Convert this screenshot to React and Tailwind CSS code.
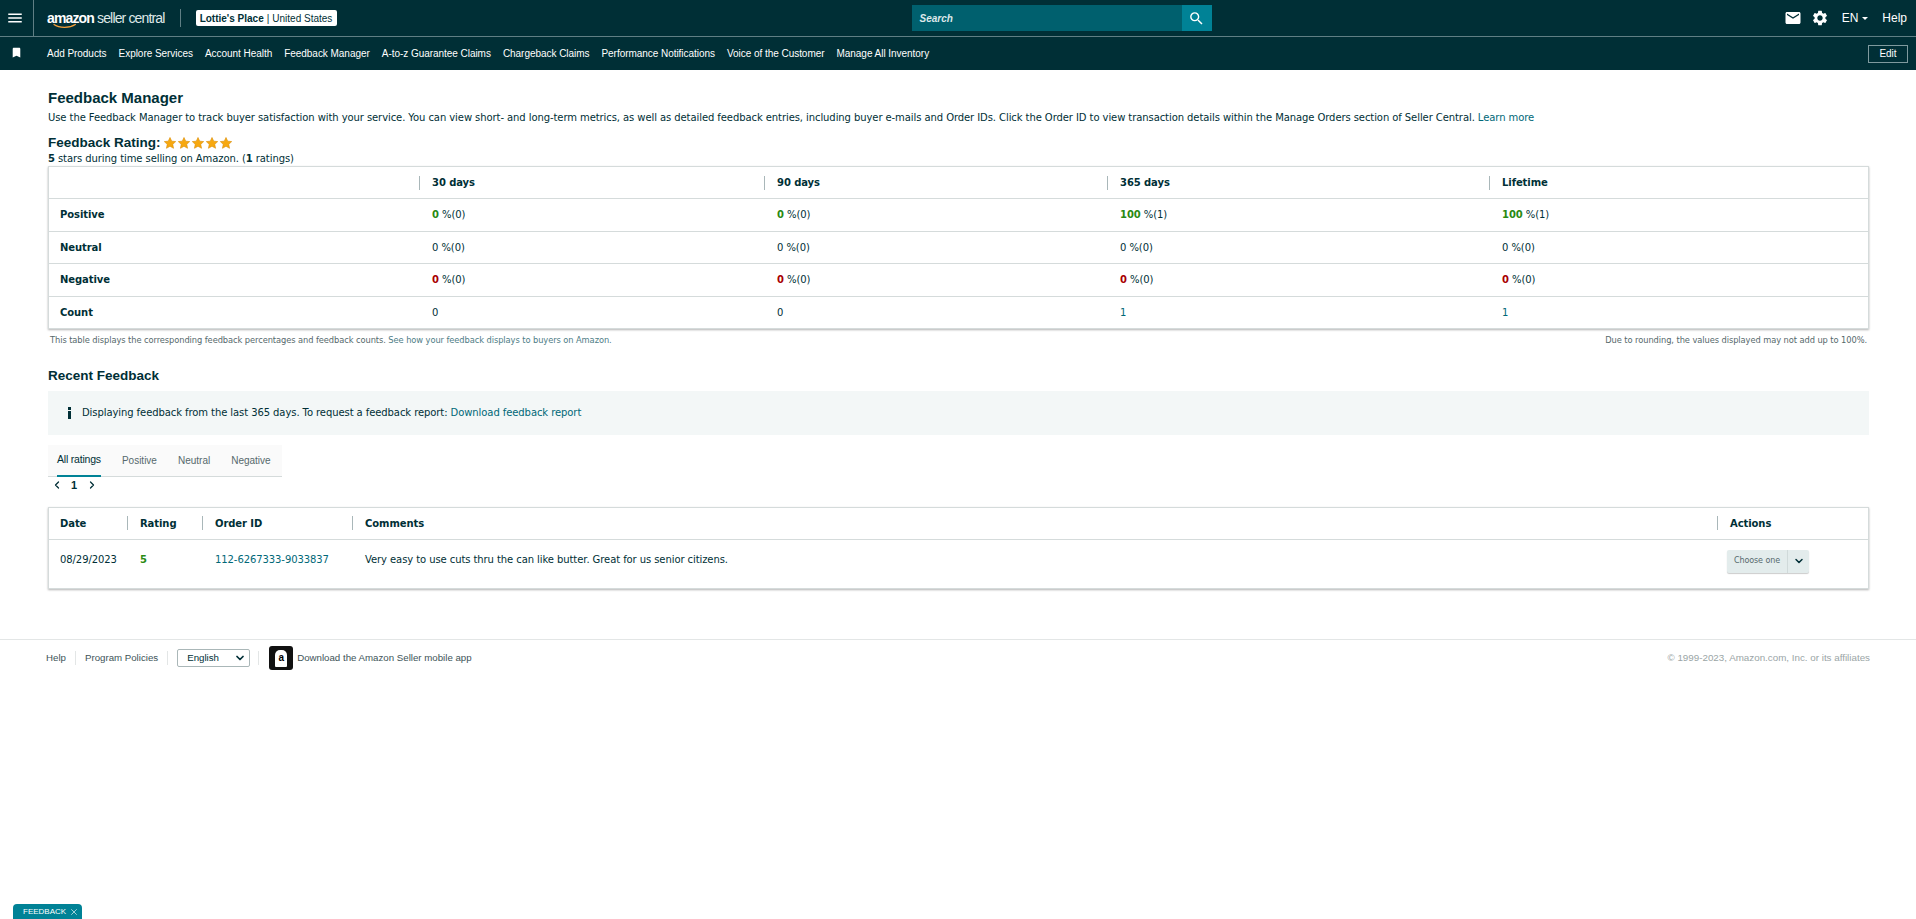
import React from 'react';
import { ChevronLeft, ChevronRight, ChevronDown, X } from 'lucide-react';
import { MdMenu, MdSearch, MdEmail, MdSettings, MdBookmark } from 'react-icons/md';

const navLinks = [
  'Add Products',
  'Explore Services',
  'Account Health',
  'Feedback Manager',
  'A-to-z Guarantee Claims',
  'Chargeback Claims',
  'Performance Notifications',
  'Voice of the Customer',
  'Manage All Inventory',
];

const summaryRows = [
  { label: 'Positive', tone: 'text-[#2a8a12]', cells: [['0', '0'], ['0', '0'], ['100', '1'], ['100', '1']] },
  { label: 'Neutral', tone: 'text-[#002f36]', cells: [['0', '0'], ['0', '0'], ['0', '0'], ['0', '0']], plain: true },
  { label: 'Negative', tone: 'text-[#a80000]', cells: [['0', '0'], ['0', '0'], ['0', '0'], ['0', '0']] },
];

const Star = () => (
  <svg viewBox="0 0 24 24" className="w-[14px] h-[14px]">
    <path
      d="M12 2.5l2.9 6.3 6.9.8-5.1 4.7 1.4 6.8L12 17.6l-6.1 3.5 1.4-6.8-5.1-4.7 6.9-.8z"
      fill="#f7a80f"
      stroke="#d98a00"
      strokeWidth="1"
    />
  </svg>
);

const HeadCell = ({ children, divider = true, className = '' }) => (
  <div className={`flex items-center h-full ${className}`}>
    {divider && <span className="w-px h-[14px] bg-[#a9b7b9] mr-[12px]" />}
    <span className="font-bold">{children}</span>
  </div>
);

function TopBar() {
  return (
    <header className="bg-[#002f36] text-white font-['Liberation_Sans',sans-serif]">
      <div className="h-[36px] flex items-center border-b border-[#5f7f84] box-content">
        <div className="w-[34px] h-full flex items-center pl-[6px] border-r border-[#5f7f84]">
          <MdMenu className="w-[18px] h-[18px]" />
        </div>
        <div className="relative ml-[13px] flex items-baseline leading-none">
          <span className="text-[14px] font-bold tracking-[-0.85px]">amazon</span>
          <span className="ml-[3px] text-[14px] tracking-[-0.85px] text-[#dfe8e8]">seller central</span>
          <svg viewBox="0 0 40 8" className="absolute left-[6px] top-[12px] w-[24px] h-[6px]">
            <path d="M1 1c10 7 26 7 37 0" fill="none" stroke="#f7a03a" strokeWidth="2" />
          </svg>
        </div>
        <span className="w-px h-[18px] bg-[#5f7f84] ml-[15px]" />
        <div className="ml-[15px] h-[16px] w-[141px] flex items-center justify-center bg-white rounded-[2px] text-[#002f36] text-[10px]">
          <span className="font-bold">Lottie's Place</span>
          <span className="mx-[3px]">|</span>
          <span>United States</span>
        </div>
        <div className="ml-[575px] w-[300px] h-[26px] flex bg-[#00606e]">
          <span className="flex-1 pl-[8px] flex items-center text-[10px] italic font-bold text-[#dce8ea]">Search</span>
          <span className="w-[30px] flex items-center justify-center bg-[#008296]">
            <MdSearch className="w-[17px] h-[17px]" />
          </span>
        </div>
        <div className="ml-auto flex items-center pr-[9px] text-[12px]">
          <MdEmail className="w-[18px] h-[18px]" />
          <MdSettings className="ml-[9px] w-[18px] h-[18px]" />
          <span className="ml-[13px]">EN</span>
          <span className="ml-[4px] border-x-[3px] border-x-transparent border-t-[3px] border-t-white" />
          <span className="ml-[14px]">Help</span>
        </div>
      </div>
      <nav className="h-[33px] flex items-center text-[10px]">
        <MdBookmark className="ml-[10px] w-[13px] h-[13px] mb-[3px]" />
        <div className="ml-[24px] flex gap-[12px] tracking-[-0.04px]">
          {navLinks.map(l => <span key={l}>{l}</span>)}
        </div>
        <span className="ml-auto mr-[8px] w-[40px] h-[18px] flex items-center justify-center border border-[#7f9a9e] text-[10px]">
          Edit
        </span>
      </nav>
    </header>
  );
}

function SummaryTable() {
  const gridCols = 'grid grid-cols-[370px_345px_343px_382px_1fr] items-center px-0';
  return (
    <div className="mt-[1px] border border-[#d5dbdb] shadow-[0_1px_2px_rgba(0,0,0,0.3)]">
      <div className={`${gridCols} h-[32px] border-b border-[#d5dbdb]`}>
        <span />
        <HeadCell>30 days</HeadCell>
        <HeadCell>90 days</HeadCell>
        <HeadCell>365 days</HeadCell>
        <HeadCell>Lifetime</HeadCell>
      </div>
      {summaryRows.map(row => (
        <div key={row.label} className={`${gridCols} h-[32.5px] border-b border-[#d5dbdb]`}>
          <span className="pl-[11px] font-bold">{row.label}</span>
          {row.cells.map(([pct, n], i) => (
            <span key={i} className="pl-[13px]">
              <span className={row.plain ? '' : `font-bold ${row.tone}`}>{pct}</span> %({n})
            </span>
          ))}
        </div>
      ))}
      <div className={`${gridCols} h-[31px]`}>
        <span className="pl-[11px] font-bold">Count</span>
        <span className="pl-[13px]">0</span>
        <span className="pl-[13px]">0</span>
        <span className="pl-[13px] text-[#006878]">1</span>
        <span className="pl-[13px] text-[#006878]">1</span>
      </div>
    </div>
  );
}

function FeedbackTable() {
  const gridCols = 'grid grid-cols-[78px_75px_150px_1365px_1fr] items-center';
  return (
    <div className="mt-[13px] border border-[#d5dbdb] shadow-[0_1px_2px_rgba(0,0,0,0.3)]">
      <div className={`${gridCols} h-[32px] border-b border-[#d5dbdb]`}>
        <span className="pl-[11px] font-bold">Date</span>
        <HeadCell>Rating</HeadCell>
        <HeadCell>Order ID</HeadCell>
        <HeadCell>Comments</HeadCell>
        <HeadCell>Actions</HeadCell>
      </div>
      <div className={`${gridCols} h-[48px]`}>
        <span className="pl-[11px] mb-[9px] whitespace-nowrap">08/29/2023</span>
        <span className="pl-[13px] mb-[9px] font-bold text-[#2a8a12]">5</span>
        <span className="pl-[13px] mb-[9px] text-[#006878] whitespace-nowrap">112-6267333-9033837</span>
        <span className="pl-[13px] mb-[9px]">Very easy to use cuts thru the can like butter. Great for us senior citizens.</span>
        <div className="flex h-[23px] w-[82px] mb-[5px] ml-[10px] bg-[#e3ecec] shadow-[0_1px_1px_rgba(0,0,0,0.2)] rounded-[2px] text-[8px] text-[#56696c]">
          <span className="flex-1 flex items-center justify-center border-r border-[#d0dada]">Choose one</span>
          <span className="w-[21px] flex items-center justify-center text-[#002f36]">
            <ChevronDown className="w-[12px] h-[12px]" strokeWidth={3} />
          </span>
        </div>
      </div>
    </div>
  );
}

function Footer() {
  return (
    <footer className="mt-[50px] h-[38px] border-t border-[#e3e6e6] flex items-center pl-[46px] pr-[46px] text-[9.7px] text-[#3d5357] font-['Liberation_Sans',sans-serif]">
      <span>Help</span>
      <span className="w-px h-[14px] bg-[#e3e6e6] mx-[9px]" />
      <span>Program Policies</span>
      <span className="w-px h-[14px] bg-[#e3e6e6] mx-[9px]" />
      <div className="w-[73px] h-[18px] border border-[#aab7b8] rounded-[2px] flex items-center justify-between pl-[9px] pr-[3px] text-[#002f36]">
        English
        <ChevronDown className="w-[12px] h-[12px]" strokeWidth={3.5} />
      </div>
      <span className="w-px h-[14px] bg-[#e3e6e6] ml-[8px] mr-[10px]" />
      <span className="w-[24px] h-[24px] rounded-[3px] bg-[#111] flex items-center justify-center">
        <span className="relative w-[12px] h-[17px] bg-white rounded-t-[5px] rounded-b-[1px] flex items-center justify-center text-[10px] font-bold text-black leading-none">
          a
        </span>
      </span>
      <span className="ml-[4px]">Download the Amazon Seller mobile app</span>
      <span className="ml-auto text-[#9aa5a6] text-[9.8px]">© 1999-2023, Amazon.com, Inc. or its affiliates</span>
    </footer>
  );
}

export default function App() {
  return (
    <div className="relative h-[919px] overflow-hidden bg-white text-[#002f36] font-['DejaVu_Sans',sans-serif]">
      <TopBar />

      <main className="pl-[48px] pr-[47px] pt-[19px] text-[10px] tracking-[-0.08px]">
        <h1 className="text-[15px] tracking-normal leading-[18px] font-bold font-['Liberation_Sans',sans-serif]">Feedback Manager</h1>
        <p className="mt-[2px] leading-[18px]">
          Use the Feedback Manager to track buyer satisfaction with your service. You can view short- and long-term metrics, as well as detailed feedback entries, including buyer e-mails and Order IDs. Click the Order ID to view transaction details within the Manage Orders section of Seller Central.{' '}
          <span className="text-[#006878]">Learn more</span>
        </p>
        <div className="mt-[8px] flex items-center h-[17px]">
          <span className="text-[13.5px] tracking-normal font-bold font-['Liberation_Sans',sans-serif]">Feedback Rating:</span>
          <span className="ml-[2px] flex mb-[2px]">
            <Star /><Star /><Star /><Star /><Star />
          </span>
        </div>
        <p className="leading-[13px]"><b>5</b> stars during time selling on Amazon. (<b>1</b> ratings)</p>

        <SummaryTable />

        <div className="mt-[6px] pl-[2px] flex justify-between text-[8.3px] leading-[11px] text-[#56696c]">
          <span>This table displays the corresponding feedback percentages and feedback counts. <span className="text-[#4e7d86]">See how your feedback displays to buyers on Amazon.</span></span>
          <span className="mr-[2px]">Due to rounding, the values displayed may not add up to 100%.</span>
        </div>

        <h2 className="mt-[21px] text-[13.5px] tracking-normal leading-[18px] font-bold font-['Liberation_Sans',sans-serif]">Recent Feedback</h2>

        <div className="mt-[6px] h-[44px] bg-[#f3f7f7] flex items-center pl-[19px]">
          <span className="w-[4px] flex flex-col items-center">
            <span className="w-[3px] h-[3px] bg-[#002f36]" />
            <span className="mt-[1px] w-[3px] h-[8px] bg-[#002f36]" />
          </span>
          <span className="ml-[11px]">
            Displaying feedback from the last 365 days. To request a feedback report: <span className="text-[#006878]">Download feedback report</span>
          </span>
        </div>

        <div className="mt-[10px] w-[234px] h-[32px] flex items-stretch gap-[21px] pl-[9px] bg-[#fafafa] border-b border-[#d5dbdb] text-[10px] tracking-normal text-[#56696c] font-['Liberation_Sans',sans-serif]">
          <span className="flex items-center text-[#002f36] border-b-2 border-[#008296] -mb-px text-[10.5px] tracking-[-0.2px]">All ratings</span>
          <span className="flex items-center">Positive</span>
          <span className="flex items-center">Neutral</span>
          <span className="flex items-center">Negative</span>
        </div>
        <div className="h-[17px] flex items-center pl-[3px] text-[11px] font-bold font-['Liberation_Sans',sans-serif]">
          <ChevronLeft className="w-[12px] h-[12px]" strokeWidth={2.5} />
          <span className="ml-[8px]">1</span>
          <ChevronRight className="ml-[9px] w-[12px] h-[12px]" strokeWidth={2.5} />
        </div>

        <FeedbackTable />
      </main>

      <Footer />

      <div className="absolute left-[13px] bottom-0 w-[69px] h-[15px] bg-[#008296] rounded-t-[4px] flex items-center pl-[10px] gap-[3px] text-white text-[8px] font-['Liberation_Sans',sans-serif]">
        FEEDBACK
        <X className="w-[10px] h-[10px]" strokeWidth={1.5} />
      </div>
    </div>
  );
}
